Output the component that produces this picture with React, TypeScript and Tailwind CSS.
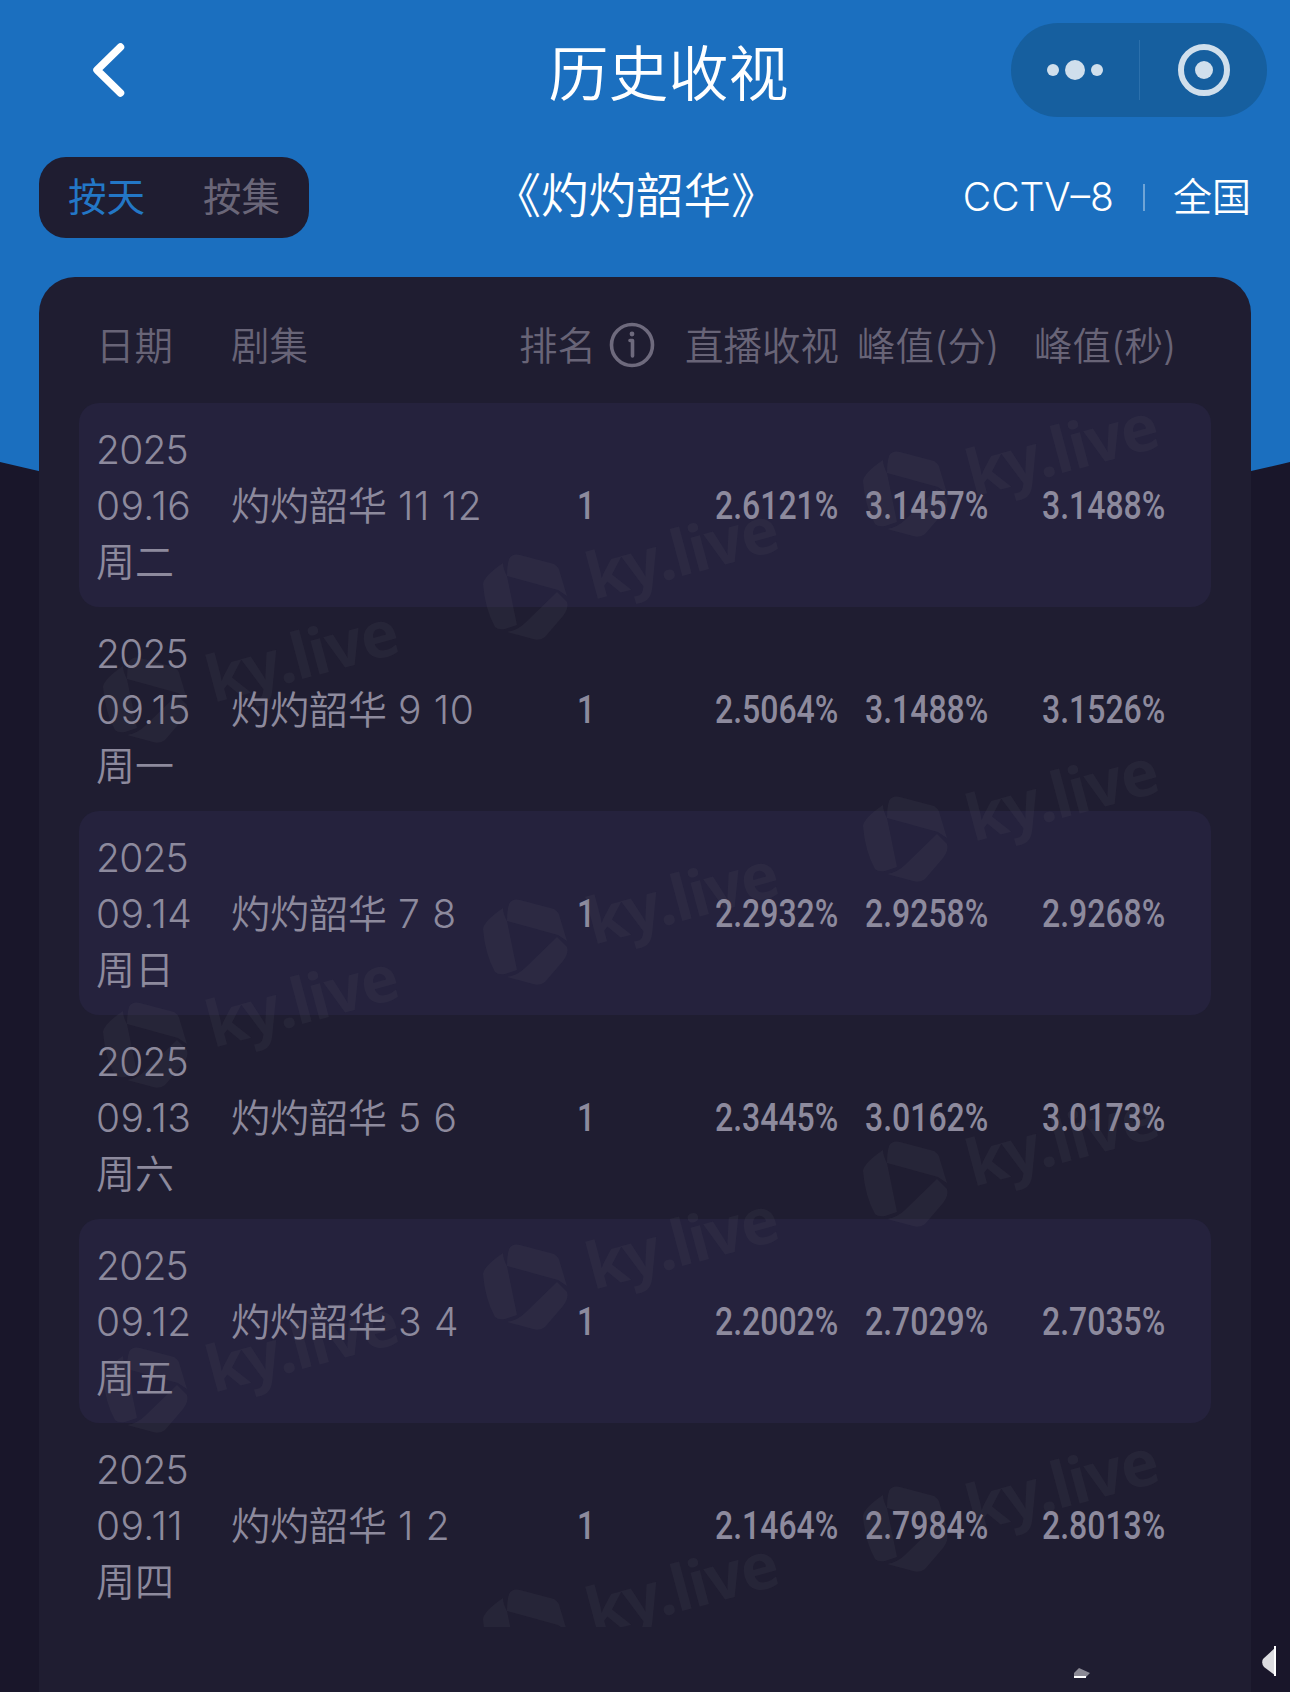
interface Rating {
  date: string;
  weekday: string;
  episodes: string;
  rank: number;
  live: string;
  peakMinute: string;
  peakSecond: string;
}

const RATINGS: Rating[] = [
  { date: '09.16', weekday: '周二', episodes: '11 12', rank: 1, live: '2.6121%', peakMinute: '3.1457%', peakSecond: '3.1488%' },
  { date: '09.15', weekday: '周一', episodes: '9 10', rank: 1, live: '2.5064%', peakMinute: '3.1488%', peakSecond: '3.1526%' },
  { date: '09.14', weekday: '周日', episodes: '7 8', rank: 1, live: '2.2932%', peakMinute: '2.9258%', peakSecond: '2.9268%' },
  { date: '09.13', weekday: '周六', episodes: '5 6', rank: 1, live: '2.3445%', peakMinute: '3.0162%', peakSecond: '3.0173%' },
  { date: '09.12', weekday: '周五', episodes: '3 4', rank: 1, live: '2.2002%', peakMinute: '2.7029%', peakSecond: '2.7035%' },
  { date: '09.11', weekday: '周四', episodes: '1 2', rank: 1, live: '2.1464%', peakMinute: '2.7984%', peakSecond: '2.8013%' },
];

// top-left corners of the tiled watermark, relative to the first table row
const MARKS = [
  [784, 48], [404, 151], [24, 254],
  [784, 393], [404, 496], [24, 599],
  [784, 738], [404, 841], [24, 944],
  [784, 1083], [404, 1186],
];

const COLUMNS = 'grid grid-cols-[135px_268px_146px_212px_150px_221px]';

function Watermark() {
  return (
    <svg className="pointer-events-none absolute left-0 top-0 h-[1224px] w-full" aria-hidden="true">
      {MARKS.map(([x, y]) => (
        <g key={`${x}-${y}`} transform={`translate(${x} ${y})`} fill="#6c6c72" fillOpacity="0.1">
          <path d="M20 9 Q1 22 0 30 Q2 55 12 73 Q15 76 22 75 L34 71 L24 22 Q20 15 20 9 Z" />
          <path d="M26 5 Q29 -1 37 1 L71 10 Q76 13 77 19 L84 42 L75 36 L24 22 Q24 12 26 5 Z" />
          <path d="M74 38 L84 48 Q86 54 80 62 L62 83 Q57 87 50 85 L24 78 Q35 76 42 69 Z" />
          <text
            transform="translate(110 46) rotate(-15)"
            className="font-['Noto_Sans'] font-bold"
            fontSize="64"
            textLength="197"
          >
            ky.live
          </text>
        </g>
      ))}
    </svg>
  );
}

function Percent({ value }: { value: string }) {
  return (
    <span className="inline-block origin-left scale-x-[0.82] font-['Roboto'] text-[39px] font-medium">
      {value}
    </span>
  );
}

function RatingRow({ rating, striped }: { rating: Rating; striped: boolean }) {
  return (
    <div
      className={`${COLUMNS} h-[204px] items-center rounded-[20px] pl-[17px] pt-px text-[39px] leading-[56px] text-[#8d8a9d] ${
        striped ? 'bg-[#25223d]' : ''
      }`}
    >
      <div>
        <p className="tracking-[-0.8px]">2025</p>
        <p className="tracking-[0.4px]">{rating.date}</p>
        <p>{rating.weekday}</p>
      </div>
      <span className="whitespace-pre">
        灼灼韶华 <span className="tracking-[0.7px]">{rating.episodes}</span>
      </span>
      <span className="pl-[76px] font-['Roboto'] font-medium">
        <span className="inline-block scale-x-[0.82]">{rating.rank}</span>
      </span>
      <span className="pl-[70px]"><Percent value={rating.live} /></span>
      <span className="pl-[8px]"><Percent value={rating.peakMinute} /></span>
      <span className="pl-[35px]"><Percent value={rating.peakSecond} /></span>
    </div>
  );
}

function TableHead() {
  return (
    <div className={`${COLUMNS} h-[126px] items-center pl-[17px] pt-[14px] text-[38.5px] whitespace-nowrap text-[#686477]`}>
      <span>日期</span>
      <span>剧集</span>
      <span className="flex items-center gap-[13px] pl-[20px]">
        排名
        <svg className="mb-[4px] size-[46px] shrink-0 text-[#6e6a7d]" viewBox="0 0 46 46" fill="none" stroke="currentColor">
          <circle cx="23" cy="23" r="20.5" strokeWidth="3.6" />
          <path d="M21 18.500 H23.500 V34" strokeWidth="3.6" strokeLinecap="round" strokeLinejoin="round" />
          <circle cx="23" cy="12" r="2.4" fill="currentColor" stroke="none" />
        </svg>
      </span>
      <span className="pl-[40px]">直播收视</span>
      <span>峰值(分)</span>
      <span className="pl-[27px]">峰值(秒)</span>
    </div>
  );
}

function NavBar() {
  return (
    <header className="flex h-[140px] items-center justify-between pl-[91px] pr-[23px]">
      <svg className="h-[58px] w-[36px]" viewBox="0 0 36 58" fill="none" stroke="white" strokeWidth="7.5" strokeLinecap="round" strokeLinejoin="round">
        <path d="M29.500 6 L6 29 L29.500 52" />
      </svg>
      <h1 className="pl-[199px] pt-[7px] text-[60px] leading-none">历史收视</h1>
      <div className="flex h-[94px] w-[256px] items-center rounded-full bg-[#165f9f]">
        <div className="flex w-[128px] items-center justify-center gap-[6px]">
          <i className="size-[12px] rounded-full bg-[#d0dfec]" />
          <i className="size-[20px] rounded-full bg-[#d0dfec]" />
          <i className="size-[12px] rounded-full bg-[#d0dfec]" />
        </div>
        <div className="h-[60px] w-px bg-[#2b70ac]" />
        <div className="flex flex-1 justify-center">
          <div className="flex size-[52px] items-center justify-center rounded-full border-[6px] border-[#d0dfec]">
            <i className="size-[18px] rounded-full bg-[#d0dfec]" />
          </div>
        </div>
      </div>
    </header>
  );
}

export default function App() {
  return (
    <div className="relative isolate h-[1692px] w-[1290px] overflow-hidden bg-[#19162a] font-['Inter','Noto_Sans_CJK_SC',sans-serif] font-[350] text-white">
      <svg className="absolute left-0 top-0 -z-10 h-[560px] w-full" viewBox="0 0 1290 560">
        <path d="M0 0 H1290 V462 Q645 620 0 462 Z" fill="#1b6fbf" />
      </svg>
      <NavBar />

      <div className="mt-[17px] flex h-[81px] items-center justify-between px-[39px]">
        <div className="flex h-full w-[270px] items-center justify-between rounded-[27px] bg-[#1f1d31] px-[29px] text-[38.5px]">
          <span className="font-normal text-[#2377c6]">按天</span>
          <span className="font-normal text-[#6a6678]">按集</span>
        </div>
        <h2 className="pb-[3px] text-[47.5px] leading-none">《灼灼韶华》</h2>
        <div className="flex items-center text-[39px]">
          <span>CCTV–8</span>
          <i className="ml-[29px] mr-[28px] h-[27px] w-[2px] bg-[#6fa4d6]" />
          <span>全国</span>
        </div>
      </div>

      <main className="mx-[39px] mt-[39px] h-[1415px] rounded-t-[36px] bg-[#1f1d31] px-[40px]">
        <TableHead />
        <div className="relative">
          {RATINGS.map((rating, index) => (
            <RatingRow key={rating.date} rating={rating} striped={index % 2 === 0} />
          ))}
          <Watermark />
        </div>
      </main>

      <svg className="absolute bottom-[12px] right-[12px] h-[36px] w-[206px]" viewBox="0 0 206 36" aria-hidden="true">
        <path d="M2 34 L2 29 L7 24 L18 29 L13 34 Z" fill="#8a8994" />
        <path d="M2 33 H14" stroke="#ffffff" strokeWidth="2" />
        <path d="M204 3 L191 15 Q189 19 192 23 L204 32 Z" fill="#dcdce0" />
        <path d="M203 2 V32" stroke="#ffffff" strokeWidth="2" />
      </svg>
    </div>
  );
}
